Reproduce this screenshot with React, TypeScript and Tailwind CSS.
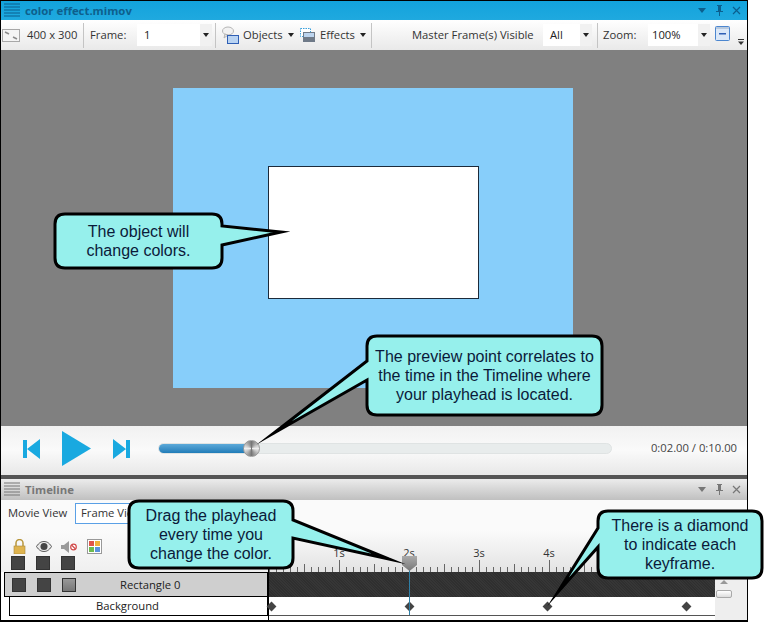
const ui = { fontFamily: '"Open Sans", "Liberation Sans", sans-serif' };

function Hamburger({ color }: { color: string }) {
  return (
    <svg width="16" height="14" viewBox="0 0 16 14" className="shrink-0">
      {[1, 4, 7, 10, 13].map((y) => (
        <rect key={y} x="0" y={y - 0.5} width="16" height="1" fill={color} />
      ))}
    </svg>
  );
}

function PaneButtons({ color }: { color: string }) {
  return (
    <div className="flex items-center gap-[8px] pr-[6px]">
      <svg width="10" height="6" viewBox="0 0 10 6">
        <path d="M1 0h8L5 5z" fill={color} />
      </svg>
      <svg width="9" height="13" viewBox="0 0 9 13">
        <path d="M2 1h5v1H6v5h2v1H5v4H4V8H1V7h2V2H2z" fill={color} />
      </svg>
      <svg width="9" height="9" viewBox="0 0 9 9">
        <path d="M1 1l7 7M8 1l-7 7" stroke={color} strokeWidth="1.2" />
      </svg>
    </div>
  );
}

function Caret() {
  return (
    <svg width="6" height="4" viewBox="0 0 6 4" className="shrink-0">
      <path d="M0 0h6L3 4z" fill="#222" />
    </svg>
  );
}

function Select({ value, width, pad }: { value: string; width: number; pad: number }) {
  return (
    <div className="flex h-[22px] shrink-0 items-center bg-white" style={{ width }}>
      <span className="flex-1 text-[11.25px] text-[#222]" style={{ paddingLeft: pad }}>
        {value}
      </span>
      <span className="flex h-full w-[12px] items-center justify-center bg-[#f1f1f1]">
        <Caret />
      </span>
    </div>
  );
}

function Sep() {
  return <div className="h-[25px] w-px shrink-0 bg-[#c4c4c4]" />;
}

function Toolbar() {
  return (
    <div className="flex h-[30px] shrink-0 items-center whitespace-nowrap bg-gradient-to-b from-white to-[#e9e9e9] text-[11.25px] text-[#333]">
      <svg width="18" height="13" viewBox="0 0 18 13" className="ml-[1px] shrink-0">
        <rect x="0.5" y="0.5" width="17" height="12" fill="#f4f4f4" stroke="#a8a8a8" />
        <path d="M3 3l4 2M11 8l4 2" stroke="#8a8a8a" strokeWidth="1.5" />
      </svg>
      <span className="ml-[7px] w-[56px] shrink-0">400 x 300</span>
      <Sep />
      <span className="ml-[6px] w-[47px] shrink-0">Frame:</span>
      <Select value="1" width={75} pad={7} />
      <div className="ml-[3px]"><Sep /></div>
      <svg width="17" height="19" viewBox="0 0 17 19" className="ml-[6px] shrink-0">
        <ellipse cx="6" cy="5" rx="5.5" ry="4" fill="#f2f2f2" stroke="#b5b5b5" />
        <path d="M3 8l-1 4 4-3z" fill="#e8e8e8" stroke="#b5b5b5" />
        <rect x="5.5" y="9.5" width="11" height="8" fill="#b9d3f2" stroke="#2f5fb5" />
      </svg>
      <span className="ml-[4px] w-[45px] shrink-0">Objects</span>
      <Caret />
      <svg width="15" height="14" viewBox="0 0 15 14" className="ml-[6px] shrink-0">
        <rect x="0.5" y="0.5" width="10" height="8" fill="#fff" stroke="#3aa0dc" strokeDasharray="1.5 1" />
        <rect x="3" y="4" width="12" height="10" fill="#6f7a88" />
        <rect x="4" y="5" width="10" height="4" fill="#bcd4ee" />
      </svg>
      <span className="ml-[5px] w-[40px] shrink-0">Effects</span>
      <Caret />
      <div className="ml-[5px]"><Sep /></div>
      <span className="ml-[40px] w-[131px] shrink-0">Master Frame(s) Visible</span>
      <Select value="All" width={49} pad={7} />
      <div className="ml-[5px]"><Sep /></div>
      <span className="ml-[5px] w-[45px] shrink-0">Zoom:</span>
      <Select value="100%" width={62} pad={4} />
      <svg width="15" height="15" viewBox="0 0 15 15" className="mb-[3px] ml-[5px] shrink-0">
        <rect x="0.5" y="0.5" width="14" height="14" rx="1" fill="#dbe8f8" stroke="#4c86cf" />
        <rect x="1" y="1" width="13" height="2" fill="#b7c9de" />
        <rect x="4" y="7" width="7" height="1.5" fill="#2f5fb5" />
      </svg>
      <svg width="6" height="6" viewBox="0 0 6 6" className="ml-[8px] mt-[14px] shrink-0">
        <rect width="6" height="1" fill="#333" />
        <path d="M0 2.5h6L3 6z" fill="#333" />
      </svg>
    </div>
  );
}

function Player() {
  return (
    <div className="flex h-[49px] shrink-0 items-center bg-gradient-to-b from-[#f1f1f1] via-[#fafafa] to-[#e8e8e8] pb-[4px]">
      <svg width="17" height="20" viewBox="0 0 17 20" className="ml-[22px] shrink-0">
        <path d="M0 1h4v18H0zM17 0v20L4 10z" fill="#19a9e0" />
      </svg>
      <svg width="29" height="35" viewBox="0 0 29 35" className="ml-[22px] shrink-0">
        <path d="M0 0l29 17.5L0 35z" fill="#19a9e0" />
      </svg>
      <svg width="17" height="20" viewBox="0 0 17 20" className="ml-[22px] shrink-0">
        <path d="M13 1h4v18h-4zM0 0v20l13-10z" fill="#19a9e0" />
      </svg>
      <div className="relative ml-[28px] h-[11px] w-[454px] shrink-0 rounded-full border border-[#dfe3e3] bg-[#e8ecec]">
        <div className="h-full w-[92px] rounded-full bg-gradient-to-b from-[#5ba9d9] to-[#1f7cb8]" />
        <div
          className="absolute left-[84px] top-[-4px] h-[17px] w-[17px] rounded-full border border-[#9a9a9a]"
          style={{ background: "conic-gradient(#777, #eee, #777, #eee, #777)" }}
        />
      </div>
      <span className="ml-auto mr-[10px] text-[11.25px] text-[#444]">0:02.00 / 0:10.00</span>
    </div>
  );
}

function Square({ light }: { light?: boolean }) {
  return (
    <div
      className={
        light
          ? "h-[14px] w-[14px] border border-[#333] bg-gradient-to-b from-[#999] to-[#777]"
          : "h-[14px] w-[14px] border border-[#333] bg-[#444]"
      }
    />
  );
}

function LayerIcons() {
  return (
    <div className="flex h-[19px] items-center">
      <svg width="13" height="15" viewBox="0 0 13 15" className="ml-[12px]">
        <path d="M3 7V4a3.5 3.5 0 017 0v3" fill="none" stroke="#b8963c" strokeWidth="1.5" />
        <rect x="1" y="7" width="11" height="8" fill="#dfb44f" stroke="#a8873a" strokeWidth=".6" />
      </svg>
      <svg width="16" height="11" viewBox="0 0 16 11" className="ml-[10px]">
        <path d="M.5 5.5C3 1.5 5.5.5 8 .5s5 1 7.5 5c-2.5 4-5 5-7.5 5s-5-1-7.5-5z" fill="#e9e9e9" stroke="#555" />
        <circle cx="8" cy="5.5" r="3.5" fill="#444" />
      </svg>
      <svg width="16" height="12" viewBox="0 0 16 12" className="ml-[9px]">
        <path d="M0 4h3l5-4v12L3 8H0z" fill="#9a9a9a" />
        <circle cx="12.5" cy="6" r="2.8" fill="#fff" stroke="#d04a4a" strokeWidth="1.2" />
        <path d="M10.5 4l4 4" stroke="#d04a4a" strokeWidth="1.2" />
      </svg>
      <svg width="15" height="15" viewBox="0 0 15 15" className="ml-[10px]">
        <rect x=".5" y=".5" width="14" height="14" fill="#fff" stroke="#999" />
        <rect x="2" y="2" width="5" height="5" fill="#e0564a" />
        <rect x="8" y="2" width="5" height="5" fill="#f0b23c" />
        <rect x="2" y="8" width="5" height="5" fill="#6dbb4f" />
        <rect x="8" y="8" width="5" height="5" fill="#5b93dc" />
      </svg>
    </div>
  );
}

function Ruler() {
  const ticks = Array.from({ length: 64 }, (_, i) => i);
  return (
    <div className="relative flex h-[42px] items-end overflow-hidden bg-gradient-to-b from-[#fbfbfb] to-[#e3e3e3]">
      {ticks.map((i) => (
        <div key={i} className="w-[7px] shrink-0">
          <div
            className={
              i % 10 === 0
                ? "h-[12px] w-px bg-[#666]"
                : i % 5 === 0
                  ? "h-[8px] w-px bg-[#666]"
                  : "h-[5px] w-px bg-[#666]"
            }
          />
        </div>
      ))}
      {["1s", "2s", "3s", "4s"].map((label, i) => (
        <span
          key={label}
          className="absolute top-[15px] w-[20px] text-center text-[11px] text-[#333]"
          style={{ left: 60 + i * 70 }}
        >
          {label}
        </span>
      ))}
    </div>
  );
}

function Diamond({ x }: { x: number }) {
  return <div className="absolute top-[6px] h-[7px] w-[7px] rotate-45 bg-[#444]" style={{ left: x }} />;
}

function Timeline() {
  return (
    <div className="flex min-h-0 flex-1 flex-col bg-white">
      <div className="flex h-[21px] shrink-0 items-center justify-between bg-gradient-to-b from-[#ececec] to-[#c0c0c0] pl-[3px]">
        <div className="flex items-center gap-[5px]">
          <Hamburger color="#777" />
          <span className="text-[11.35px] font-bold text-[#777]">Timeline</span>
        </div>
        <PaneButtons color="#777" />
      </div>
      <div className="flex h-[30px] shrink-0 items-start whitespace-nowrap bg-[#fafafa] pl-[7px] pt-[3px] text-[11.25px] text-[#333]">
        <span className="flex h-[21px] w-[67px] items-center">Movie View</span>
        <div className="flex h-[21px] w-[70px] items-center overflow-hidden border border-[#5aa0e6] bg-white pl-[5px]">
          Frame View
        </div>
      </div>
      <div className="flex min-h-0 flex-1">
        <div className="w-[267px] shrink-0">
          <div className="h-[42px] bg-gradient-to-b from-[#fbfbfb] to-[#efefef] pt-[7px]">
            <LayerIcons />
            <div className="flex gap-[11px] pl-[10px]">
              <Square />
              <Square />
              <Square />
            </div>
          </div>
          <div className="ml-[3px] flex h-[25px] items-center gap-[11px] border border-black bg-[#cfcfcf] pl-[7px] text-[11.25px] text-[#222]">
            <Square />
            <Square />
            <Square light />
            <span className="ml-[33px] pt-px">Rectangle 0</span>
          </div>
          <div className="ml-[8px] flex h-[19px] items-center border border-t-0 border-black bg-white pl-[86px] pt-px text-[11.25px] text-[#222]">
            Background
          </div>
        </div>
        <div className="relative min-w-0 flex-1 border-l border-black">
          <Ruler />
          <div
            className="h-[25px] bg-[#333]"
            style={{ backgroundImage: "repeating-linear-gradient(45deg, #2f2f2f 0 1px, #363636 1px 2px)" }}
          />
          <div className="relative h-[19px] border-b border-[#555] bg-white">
            <Diamond x={-1.5} />
            <Diamond x={136.5} />
            <Diamond x={274.5} />
            <Diamond x={413.5} />
          </div>
          <div className="absolute left-[140px] top-[26px] h-[59px] w-px bg-[#2f7fa6]" />
          <svg width="15" height="15" viewBox="0 0 15 15" className="absolute left-[133px] top-[26px]">
            <defs>
              <linearGradient id="ph" x1="0" y1="0" x2="0" y2="1">
                <stop offset="0" stopColor="#aaa" />
                <stop offset="1" stopColor="#777" />
              </linearGradient>
            </defs>
            <path d="M0 0h15v9l-7.5 6L0 9z" fill="url(#ph)" />
          </svg>
        </div>
        <div className="flex w-[32px] shrink-0 flex-col bg-[#eeeeee] pl-px pt-[50px]">
          <svg width="8" height="4" viewBox="0 0 8 4" className="ml-[4px]">
            <path d="M0 4h8L4 0z" fill="#999" />
          </svg>
          <div className="mt-[6px] h-[8px] w-[16px] rounded-[2px] border border-[#a9a9a9] bg-gradient-to-b from-white to-[#ddd]" />
        </div>
      </div>
    </div>
  );
}

function Callout({ d, lines, left, top, width }: { d: string; lines: string[]; left: number; top: number; width: number }) {
  return (
    <>
      <svg width="771" height="622" viewBox="0 0 771 622" className="pointer-events-none absolute left-0 top-0">
        <path d={d} fill="#96f0ec" stroke="#000" strokeWidth="3" strokeLinejoin="miter" strokeMiterlimit="30" />
      </svg>
      <div
        className="absolute text-center text-[16px] leading-[19px] text-[#0b1a3a]"
        style={{ left, top, width, fontFamily: '"Liberation Sans", Arial, sans-serif' }}
      >
        {lines.map((l) => (
          <div key={l}>{l}</div>
        ))}
      </div>
    </>
  );
}

export default function App() {
  return (
    <div className="relative h-[622px] w-[771px] overflow-hidden bg-white" style={ui}>
      <div className="flex h-[622px] w-[748px] flex-col border border-b-2 border-black">
        <div className="flex h-[19px] shrink-0 items-center justify-between bg-gradient-to-b from-[#12a3dc] to-[#1fa9df] pl-[3px]">
          <div className="flex items-center gap-[5px]">
            <Hamburger color="#0b5f8e" />
            <span className="text-[11.35px] font-bold text-[#0e5f8c]">color effect.mimov</span>
          </div>
          <PaneButtons color="#0b5f8e" />
        </div>
        <Toolbar />
        <div className="h-[376px] shrink-0 bg-[#808080] pl-[172px] pt-[38px]">
          <div className="h-[300px] w-[400px] bg-[#87cefa] pl-[95px] pt-[78px]">
            <div className="h-[133px] w-[211px] border border-[#1c2a3a] bg-white" />
          </div>
        </div>
        <Player />
        <div className="h-[4px] shrink-0 bg-[#555]" />
        <Timeline />
      </div>

      <Callout
        d="M65 214H212Q222 214 222 224V226L281 232L222 245V258Q222 268 212 268H65Q55 268 55 258V224Q55 214 65 214Z"
        lines={["The object will", "change colors."]}
        left={55}
        top={222}
        width={167}
      />
      <Callout
        d="M377 336H592Q602 336 602 346V405Q602 415 592 415H377Q367 415 367 405V380L274 433L367 361V346Q367 336 377 336Z"
        lines={["The preview point correlates to", "the time in the Timeline where", "your playhead is located."]}
        left={367}
        top={347}
        width={235}
      />
      <Callout
        d="M139 501H283Q293 501 293 511V520L389 559L293 538V558Q293 568 283 568H139Q129 568 129 558V511Q129 501 139 501Z"
        lines={["Drag the playhead", "every time you", "change the color."]}
        left={129}
        top={506}
        width={164}
      />
      <Callout
        d="M608 511H752Q762 511 762 521V568Q762 578 752 578H608Q598 578 598 568V547L558 592L598 528V521Q598 511 608 511Z"
        lines={["There is a diamond", "to indicate each", "keyframe."]}
        left={598}
        top={516}
        width={164}
      />
    </div>
  );
}
